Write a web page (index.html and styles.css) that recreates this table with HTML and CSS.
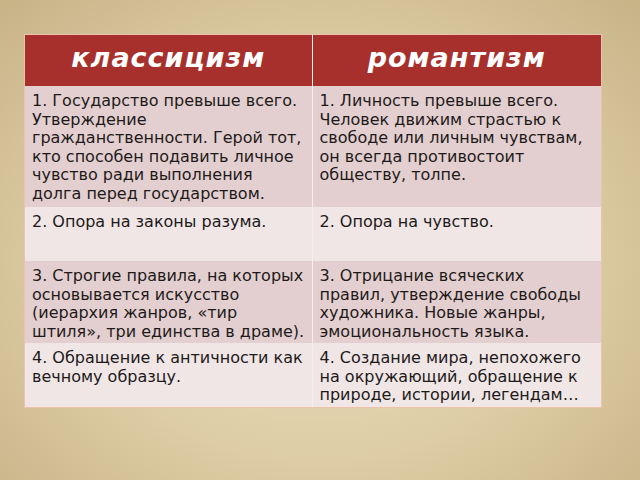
FILE: index.html
```html
<!DOCTYPE html>
<html lang="ru">
<head>
<meta charset="utf-8">
<link rel="stylesheet" href="styles.css">
</head>
<body>
<div class="slide">
  <table class="compare">
    <colgroup><col class="c1"><col class="c2"></colgroup>
    <thead>
      <tr class="head"><th>классицизм</th><th>романтизм</th></tr>
    </thead>
    <tbody>
      <tr class="r1 odd">
        <td>1. Государство превыше всего. Утверждение гражданственности. Герой тот, кто способен подавить личное чувство ради выполнения долга перед государством.</td>
        <td>1. Личность превыше всего. Человек движим страстью к свободе или личным чувствам, он всегда противостоит обществу, толпе.</td>
      </tr>
      <tr class="r2 even">
        <td>2. Опора на законы разума.</td>
        <td>2. Опора на чувство.</td>
      </tr>
      <tr class="r3 odd">
        <td>3. Строгие правила, на которых основывается искусство (иерархия жанров, «тир штиля», три единства в драме).</td>
        <td>3. Отрицание всяческих правил, утверждение свободы художника. Новые жанры, эмоциональность языка.</td>
      </tr>
      <tr class="r4 even">
        <td>4. Обращение к античности как вечному образцу.</td>
        <td>4. Создание мира, непохожего на окружающий, обращение к природе, истории, легендам…</td>
      </tr>
    </tbody>
  </table>
</div>
</body>
</html>
```

FILE: styles.css
```css
html, body {
  margin: 0;
  padding: 0;
}
.slide {
  width: 640px;
  height: 480px;
  box-sizing: border-box;
  padding: 35px 0 0 25px;
  background: radial-gradient(ellipse 70% 75% at 50% 55%, #ebe1c4 0%, #ddcca4 55%, #c9b488 100%);
  font-family: "DejaVu Sans", "Liberation Sans", sans-serif;
}
.compare {
  width: 576px;
  border-collapse: collapse;
  table-layout: fixed;
  box-shadow: 0 0 0 1px #eec3ad;
}
.c1 { width: 287px; }
.c2 { width: 289px; }
.head th {
  height: 45px;
  padding: 0 0 6px 0;
  background: #a8302c;
  color: #fff;
  font-size: 27px;
  letter-spacing: 1px;
  font-weight: bold;
  font-style: italic;
  text-align: center;
  vertical-align: middle;
}
.compare th + th,
.compare td + td {
  border-left: 1px solid #f7eeee;
}
.compare td {
  padding: 6px 6px 0 7px;
  vertical-align: top;
  font-size: 16px;
  line-height: 18.6px;
  color: #1e1a1a;
  text-align: left;
}
.compare td + td {
  padding-right: 14px;
}
.odd td { background: #e4cfd0; }
.even td { background: #f0e6e6; }
.r1 td { height: 115px; }
.r2 td { height: 48px; }
.r3 td { height: 76px; }
.r4 td { height: 58px; }
```
